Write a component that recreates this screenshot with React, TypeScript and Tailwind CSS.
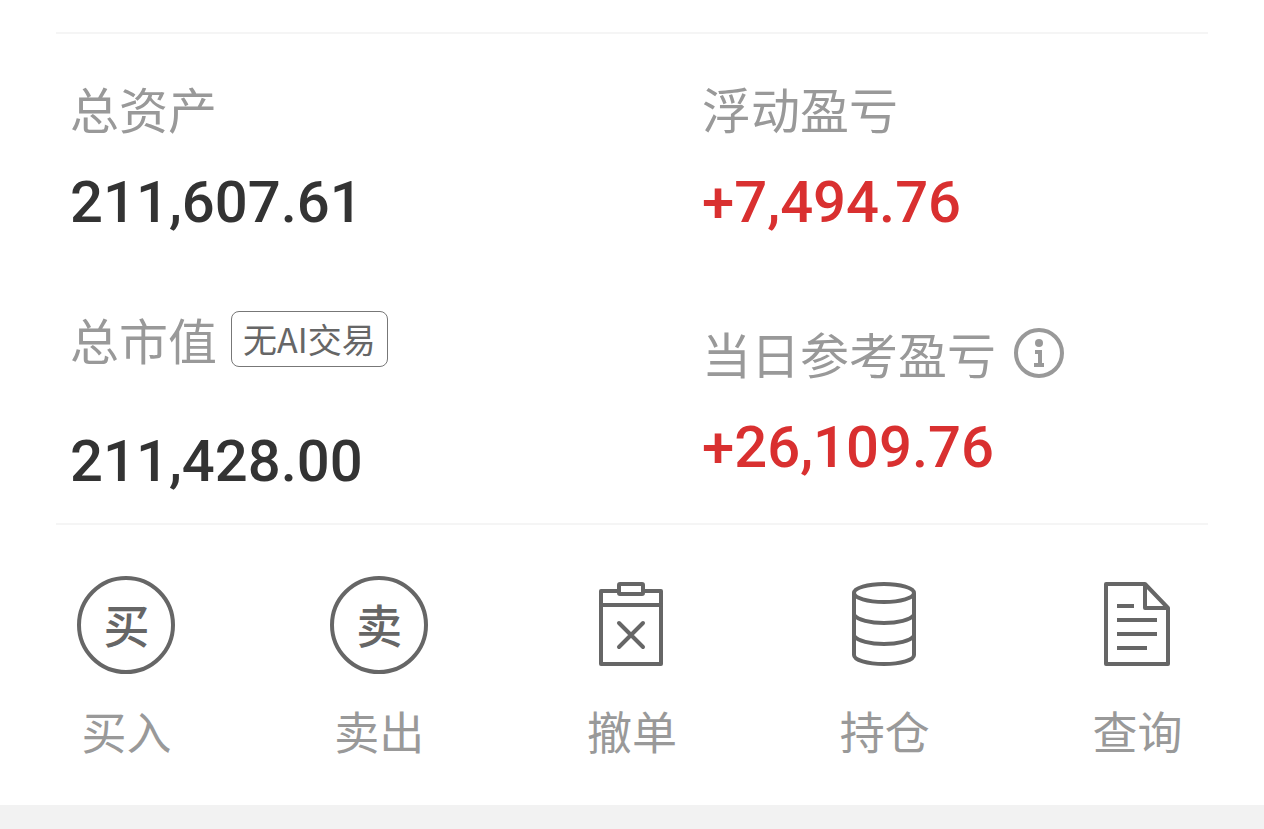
import React from 'react';

const CircleIcon = ({ text }: { text: string }) => (
  <span className="flex size-[98px] items-center justify-center rounded-full border-4 border-[#666] pb-1 text-[46px] leading-[46px] font-medium text-[#666]">
    {text}
  </span>
);

const CancelIcon = () => (
  <svg className="size-[100px]" viewBox="0 0 100 100" fill="none" stroke="#666" strokeWidth="4" strokeLinejoin="round" strokeLinecap="round">
    <path d="M36 16H19V89H79V16H63" />
    <rect x="37" y="9" width="24" height="10" rx="1" />
    <path d="M19 30H79M37 48L61 72M61 48L37 72" />
  </svg>
);

const PositionIcon = () => (
  <svg className="size-[100px]" viewBox="0 0 100 100" fill="none" stroke="#666" strokeWidth="4">
    <ellipse cx="49" cy="18" rx="30" ry="9" />
    <path d="M19 18V80C19 85 32 89 49 89S79 85 79 80V18" />
    <path d="M19 40C23 45 35 48 49 48S75 45 79 40M19 61C23 66 35 69 49 69S75 66 79 61" />
  </svg>
);

const QueryIcon = () => (
  <svg className="size-[100px]" viewBox="0 0 100 100" fill="none" stroke="#666" strokeWidth="4" strokeLinejoin="round">
    <path d="M18 9H57L80 33V89H18V9Z" />
    <path d="M57 9V33H80" />
    <path d="M29 31H46M29 45H69M29 59H69M29 73H59" />
  </svg>
);

const actions = [
  { label: '买入', icon: <CircleIcon text="买" /> },
  { label: '卖出', icon: <CircleIcon text="卖" /> },
  { label: '撤单', icon: <CancelIcon /> },
  { label: '持仓', icon: <PositionIcon /> },
  { label: '查询', icon: <QueryIcon /> },
];

type StatProps = {
  label: string;
  value: string;
  valueClass: string;
  extra?: React.ReactNode;
};

function Stat({ label, value, valueClass, extra }: StatProps) {
  return (
    <div>
      <div className="flex items-center text-[49px] leading-[64px] whitespace-nowrap text-[#999]">
        <span>{label}</span>
        {extra}
      </div>
      <p className={`font-[Roboto] text-[58px] leading-[64px] font-medium ${valueClass}`}>
        {value}
      </p>
    </div>
  );
}

function App() {
  return (
    <div className="flex min-h-screen flex-col bg-white pt-8 font-['Noto_Sans_CJK_SC',sans-serif]">
      <hr className="mx-14 border-t-2 border-[#f5f5f5]" />

      <section className="grid grid-cols-2 pt-[42px] pb-[30px]">
        <div className="flex flex-col gap-[73px] pl-[70px]">
          <Stat label="总资产" value="211,607.61" valueClass="mt-[30px] text-[#333]" />
          <Stat
            label="总市值"
            value="211,428.00"
            valueClass="mt-[58px] text-[#333]"
            extra={
              <button className="ml-[14px] h-14 rounded-lg border border-[#777] px-[11px] text-[34px] leading-[54px] text-[#666]">
                无AI交易
              </button>
            }
          />
        </div>
        <div className="flex flex-col gap-[87px] pl-[70px]">
          <Stat label="浮动盈亏" value="+7,494.76" valueClass="mt-[30px] text-[#d93030]" />
          <Stat
            label="当日参考盈亏"
            value="+26,109.76"
            valueClass="mt-[30px] text-[#d93030]"
            extra={
              <button aria-label="说明" className="ml-[17px]">
                <svg className="size-[52px]" viewBox="0 0 52 52" fill="none">
                  <circle cx="26" cy="26" r="23" stroke="#999" strokeWidth="4" />
                  <circle cx="26" cy="16" r="4" fill="#999" />
                  <path d="M22 25H27V38M21 38H31" stroke="#999" strokeWidth="4" />
                </svg>
              </button>
            }
          />
        </div>
      </section>

      <hr className="mx-14 border-t-2 border-[#f5f5f5]" />

      <nav className="grid grid-cols-5 pt-[50px] pb-[42px]">
        {actions.map(({ label, icon }) => (
          <button key={label} className="flex flex-col items-center gap-6">
            <span className="flex size-[100px] items-center justify-center">{icon}</span>
            <span className="text-[45px] leading-[64px] text-[#999]">{label}</span>
          </button>
        ))}
      </nav>

      <div className="min-h-6 flex-1 bg-[#f2f2f2]" />
    </div>
  );
}

export default App;
